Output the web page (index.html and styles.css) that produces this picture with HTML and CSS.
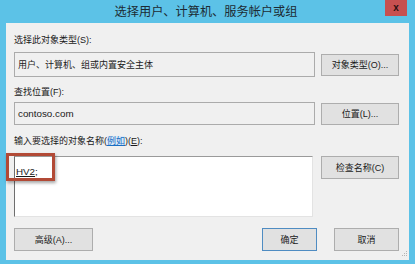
FILE: index.html
```html
<!DOCTYPE html>
<html lang="zh-CN">
<head>
<meta charset="utf-8">
<title>选择用户、计算机、服务帐户或组</title>
<link rel="stylesheet" href="styles.css">
</head>
<body>
<div class="window">
  <div class="titlebar">
    <span class="title">选择用户、计算机、服务帐户或组</span>
    <span class="close">x</span>
  </div>
  <div class="client">
    <div class="label">选择此对象类型(S):</div>
    <div class="row r1">
      <div class="field">用户、计算机、组或内置安全主体</div>
      <div class="btn">对象类型(O)...</div>
    </div>
    <div class="label l2">查找位置(F):</div>
    <div class="row r2">
      <div class="field lat">contoso.com</div>
      <div class="btn">位置(L)...</div>
    </div>
    <div class="label l3">输入要选择的对象名称(<span class="link">例如</span>)(<u>E</u>):</div>
    <div class="row r3">
      <div class="area"><span class="lat"><u>HV2</u>;</span><div class="highlight"></div></div>
      <div class="btn">检查名称(C)</div>
    </div>
    <div class="footer">
      <div class="btn adv">高级(A)...</div>
      <div class="spacer"></div>
      <div class="btn ok">确定</div>
      <div class="btn cancel">取消</div>
    </div>
    <svg class="grip" width="7" height="7" viewBox="0 0 7 7">
      <rect x="5" y="0" width="1" height="1" fill="#b4b4b4"/>
      <rect x="3" y="2" width="1" height="1" fill="#b4b4b4"/>
      <rect x="5" y="2" width="1" height="1" fill="#b4b4b4"/>
      <rect x="1" y="4" width="1" height="1" fill="#b4b4b4"/>
      <rect x="3" y="4" width="1" height="1" fill="#b4b4b4"/>
      <rect x="5" y="4" width="1" height="1" fill="#b4b4b4"/>
    </svg>
  </div>
</div>
</body>
</html>
```
FILE: styles.css
```css
* { box-sizing: border-box; }
html, body { margin: 0; padding: 0; }
body {
  width: 415px;
  height: 264px;
  overflow: hidden;
  font-family: "Liberation Sans", "Noto Sans CJK SC", sans-serif;
  font-size: 9px;
  color: #1a1a1a;
}
.window {
  width: 415px;
  height: 264px;
  background: #5cc2e7;
  display: flex;
  flex-direction: column;
}
.titlebar {
  position: relative;
  height: 23px;
  display: flex;
  align-items: center;
  justify-content: center;
  flex: none;
}
.title {
  font-family: "Noto Sans CJK SC", sans-serif;
  font-size: 12.2px;
  color: #1c2b33;
  margin-top: -1px;
  margin-left: -3px;
}
.close {
  position: absolute;
  left: 385px;
  top: 0;
  width: 22px;
  height: 16px;
  background: #c75050;
  color: #2a1010;
  font-weight: bold;
  font-size: 10px;
  display: flex;
  align-items: center;
  justify-content: center;
  line-height: 1;
}
.client {
  position: relative;
  flex: 1;
  margin: 0 6px 4px 6px;
  background: #f0f0f0;
  padding: 11px 10px 0 8px;
  display: flex;
  flex-direction: column;
}
.label {
  line-height: 12px;
  height: 12px;
}
.l2 { margin-top: 9px; }
.l3 { margin-top: 10px; }
.row {
  display: flex;
  gap: 6px;
  margin-top: 6px;
}
.r1 { height: 25px; align-items: center; }
.r2 { height: 23px; margin-top: 4px; align-items: center; }
.r3 { height: 61px; margin-top: 9px; gap: 8px; align-items: flex-start; }
.field {
  width: 301px;
  height: 100%;
  border: 1px solid #ababab;
  background: #f0f0f0;
  display: flex;
  align-items: center;
  padding-left: 3px;
  padding-bottom: 1px;
}
.lat { font-size: 9.8px; }
.btn {
  flex: none;
  width: 78px;
  height: 22px;
  border: 1px solid #adadad;
  background: #e1e1e1;
  display: flex;
  align-items: center;
  justify-content: center;
  white-space: nowrap;
}
.r3 .btn { height: 23px; }
.area {
  position: relative;
  width: 299px;
  height: 61px;
  background: #fff;
  border: 1px solid #e3e3e3;
  border-left-color: #6e6e6e;
  border-top-color: #9a9a9a;
  padding: 9px 0 0 1px;
  line-height: 12px;
}
.highlight {
  position: absolute;
  left: -9px;
  top: -4px;
  width: 49px;
  height: 28px;
  border: 3px solid #b24a36;
  box-shadow: 1px 2px 3px rgba(0, 0, 0, 0.35);
}
.link {
  color: #1a6fc4;
  text-decoration: underline;
  background: #dbe9f7;
}
.footer {
  display: flex;
  margin-top: 11px;
  height: 23px;
}
.footer .btn { height: 23px; }
.adv { width: 79px; }
.spacer { flex: 1; }
.ok {
  width: 55px;
  border-color: #4f8cc2;
  margin-right: 17px;
}
.cancel { width: 65px; }
.grip {
  position: absolute;
  right: 1px;
  bottom: 2px;
}
```
